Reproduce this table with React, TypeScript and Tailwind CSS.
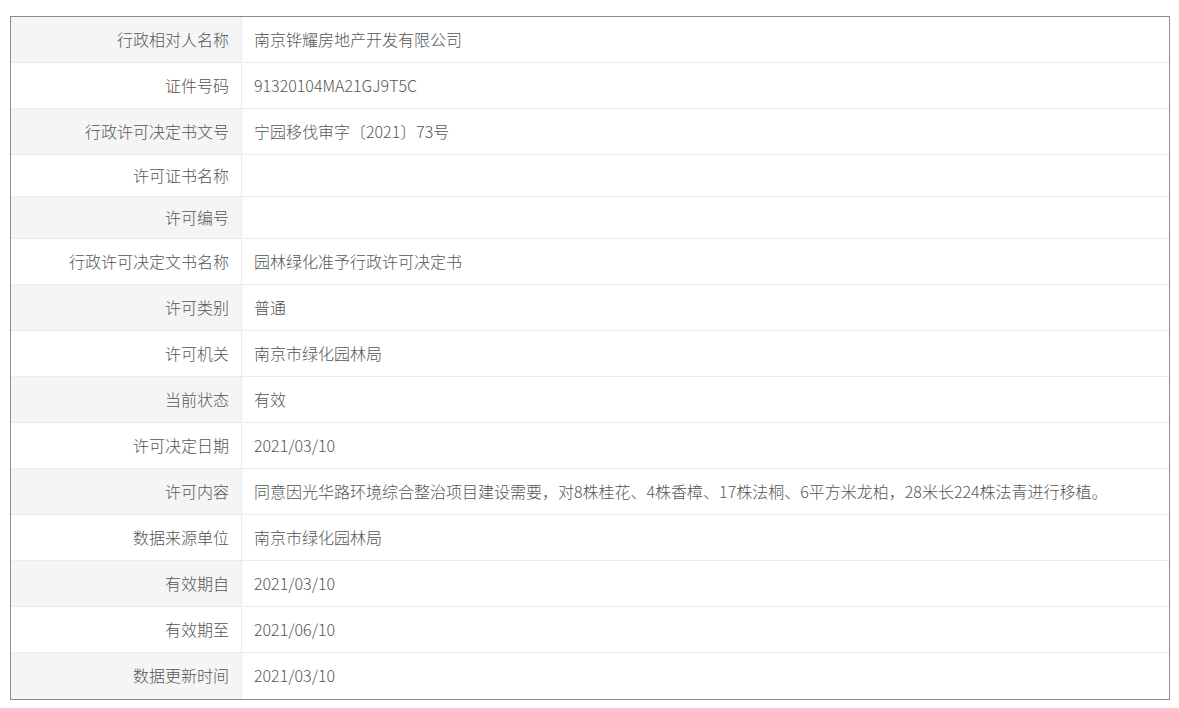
import React from 'react';

const rows: { label: string; value: string; short?: boolean }[] = [
  { label: '行政相对人名称', value: '南京铧耀房地产开发有限公司' },
  { label: '证件号码', value: '91320104MA21GJ9T5C' },
  { label: '行政许可决定书文号', value: '宁园移伐审字〔2021〕73号' },
  { label: '许可证书名称', value: '', short: true },
  { label: '许可编号', value: '', short: true },
  { label: '行政许可决定文书名称', value: '园林绿化准予行政许可决定书' },
  { label: '许可类别', value: '普通' },
  { label: '许可机关', value: '南京市绿化园林局' },
  { label: '当前状态', value: '有效' },
  { label: '许可决定日期', value: '2021/03/10' },
  {
    label: '许可内容',
    value:
      '同意因光华路环境综合整治项目建设需要，对8株桂花、4株香樟、17株法桐、6平方米龙柏，28米长224株法青进行移植。',
  },
  { label: '数据来源单位', value: '南京市绿化园林局' },
  { label: '有效期自', value: '2021/03/10' },
  { label: '有效期至', value: '2021/06/10' },
  { label: '数据更新时间', value: '2021/03/10' },
];

export default function App() {
  return (
    <div
      className="min-h-screen bg-white pt-[16px] pl-[10px] text-[16px] font-light text-[#555]"
      style={{ fontFamily: '"Noto Sans CJK SC", "Noto Sans", sans-serif' }}
    >
      <div className="w-[1160px] border border-[#8c8c8c] bg-white">
        {rows.map((row, i) => (
          <div
            key={i}
            className={`grid grid-cols-[231px_1fr] ${
              i < rows.length - 1 ? 'border-b border-[#ebebeb]' : ''
            } ${row.short ? 'h-[42px]' : 'h-[46px]'}`}
          >
            <div
              className={`flex items-center justify-end border-r border-[#ebebeb] pr-[12px] pb-[2px] ${
                i % 2 === 0 ? 'bg-[#f5f5f5]' : 'bg-white'
              }`}
            >
              {row.label}
            </div>
            <div className="flex items-center pl-[12px] pb-[2px] whitespace-nowrap">{row.value}</div>
          </div>
        ))}
      </div>
    </div>
  );
}
